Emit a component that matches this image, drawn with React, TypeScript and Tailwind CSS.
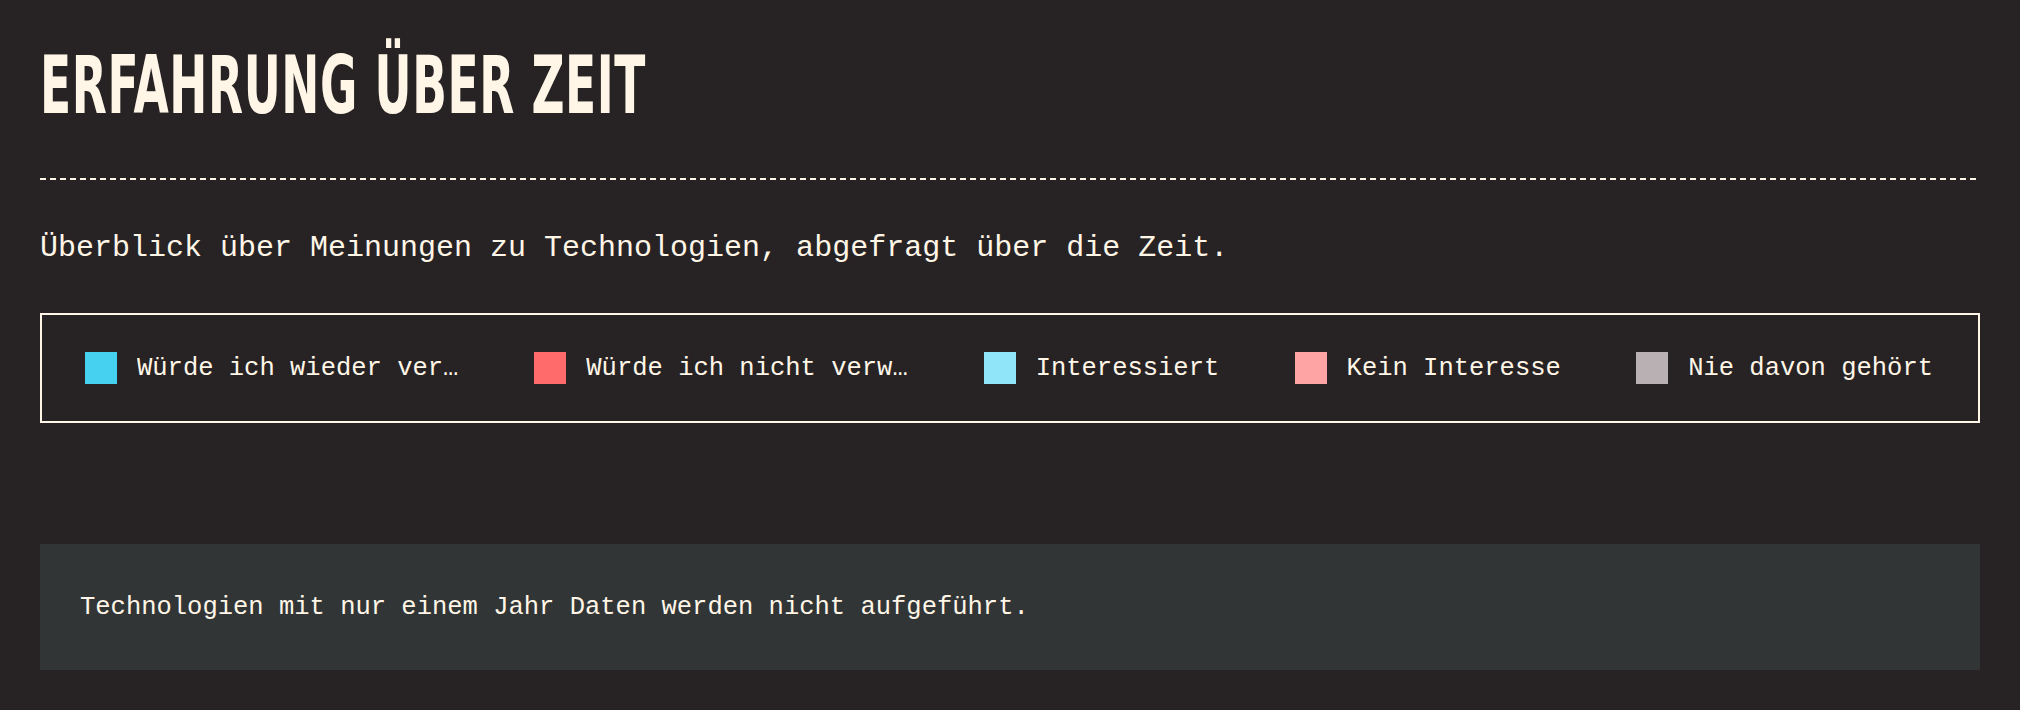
import React from "react";

const items = [
  { color: "bg-[#45d1ef]", label: "Würde ich wieder verwenden" },
  { color: "bg-[#ff6b6b]", label: "Würde ich nicht verwenden" },
  { color: "bg-[#90e6f8]", label: "Interessiert" },
  { color: "bg-[#ffa4a4]", label: "Kein Interesse" },
  { color: "bg-[#b9b0b4]", label: "Nie davon gehört" },
];

export default function App() {
  return (
    <div className="min-h-[710px] w-full bg-[#272324] px-10 pt-[45px] pb-10 text-[#fff6e7] font-['Liberation_Mono','DejaVu_Sans_Mono',monospace]">
      <h1 className="origin-left scale-x-[0.625] whitespace-nowrap text-[81px] leading-[81px] font-bold tracking-[1px] font-['DejaVu_Sans_Condensed','DejaVu_Sans',sans-serif]">
        ERFAHRUNG ÜBER ZEIT
      </h1>
      <div className="mt-[52px] h-[2px] w-full bg-[repeating-linear-gradient(to_right,#fff6e7_0px,#fff6e7_6px,transparent_6px,transparent_10px)]" />
      <p className="mt-[50px] text-[30px] leading-[36px]">
        Überblick über Meinungen zu Technologien, abgefragt über die Zeit.
      </p>
      <div className="mt-[47px] flex h-[110px] items-center justify-between border-2 border-[#fff6e7] pl-[43px] pr-[45px]">
        {items.map((it) => (
          <div key={it.label} className="flex items-center gap-5">
            <span className={`block h-8 w-8 shrink-0 ${it.color}`} />
            <span className="block max-w-[322px] truncate pt-[2px] text-[25.5px] leading-8">
              {it.label}
            </span>
          </div>
        ))}
      </div>
      <div className="mt-[121px] flex h-[126px] items-center bg-[#313536] px-10">
        <p className="pt-[2px] text-[25.5px] leading-8">
          Technologien mit nur einem Jahr Daten werden nicht aufgeführt.
        </p>
      </div>
    </div>
  );
}
